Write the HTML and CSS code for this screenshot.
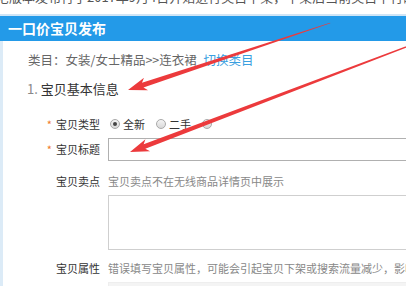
FILE: index.html
```html
<!DOCTYPE html>
<html lang="zh">
<head>
<meta charset="utf-8">
<link rel="stylesheet" href="styles.css">
</head>
<body>
<div class="page">
  <div class="note"><span>宅版本发布行了2017年9月4日开始进行类目下架，下架后当前类目下行的宝贝</span></div>
  <div class="topline"></div>
  <div class="header">一口价宝贝发布</div>
  <div class="panel">
    <div class="cat">类目：女装/女士精品&gt;&gt;连衣裙 <a class="link">切换类目</a></div>
    <div class="section"><span class="num">1.</span> 宝贝基本信息</div>
    <div class="form">
      <div class="row r-type">
        <div class="label"><span class="req">*</span>宝贝类型</div>
        <div class="field radios">
          <span class="radio checked"></span><span class="rtext">全新</span>
          <span class="radio"></span><span class="rtext">二手</span>
          <span class="radio"></span>
        </div>
      </div>
      <div class="row r-title">
        <div class="label tall"><span class="req">*</span>宝贝标题</div>
        <div class="field"><div class="input"></div></div>
      </div>
      <div class="row r-sell">
        <div class="label">宝贝卖点</div>
        <div class="field hint">宝贝卖点不在无线商品详情页中展示</div>
      </div>
      <div class="row r-area">
        <div class="label"></div>
        <div class="field"><div class="textarea"></div></div>
      </div>
      <div class="row r-attr">
        <div class="label">宝贝属性</div>
        <div class="field hint">错误填写宝贝属性，可能会引起宝贝下架或搜索流量减少，影响您的正常销售</div>
      </div>
      <div class="row r-box">
        <div class="label"></div>
        <div class="field"><div class="graybox"></div></div>
      </div>
    </div>
  </div>
  <svg class="arrows" width="406" height="286" viewBox="0 0 406 286">
    <g transform="translate(128 90) rotate(-18.35)">
      <polygon class="arrow" points="0,0 19,-6.5 15.5,-2.4 213,-0.3 213,0.3 15.5,2.4 19,6.5"/>
    </g>
    <g transform="translate(130 152) rotate(-20.83)">
      <polygon class="arrow" points="0,0 19,-6.5 15.5,-2.4 300,-0.6 300,0.6 15.5,2.4 19,6.5"/>
    </g>
  </svg>
</div>
</body>
</html>
```
FILE: styles.css
```css
html, body {
  margin: 0;
  padding: 0;
  background: #fff;
}
.page {
  position: relative;
  width: 406px;
  height: 286px;
  overflow: hidden;
  font-family: "Noto Sans CJK SC", "Noto Sans", sans-serif;
  color: #333;
}
.note {
  height: 14px;
  overflow: hidden;
  white-space: nowrap;
}
.note span {
  display: block;
  margin-top: -10px;
  margin-left: -4px;
  font-size: 13px;
  line-height: 13px;
  color: #555;
}
.topline {
  height: 2px;
  background: #cfe5f6;
}
.header {
  height: 25px;
  line-height: 25px;
  background: #239ae8;
  color: #fff;
  font-size: 14px;
  font-weight: bold;
  padding-left: 8px;
}
.panel {
  border-left: 3px solid #dcebf7;
  padding-top: 9px;
  height: 300px;
}
.cat {
  padding-left: 25px;
  font-size: 12.5px;
  line-height: 20px;
  color: #666;
  white-space: nowrap;
}
.link {
  color: #3aa0e0;
  margin-left: 4px;
}
.section {
  padding-left: 24px;
  margin-top: 8px;
  font-size: 13px;
  line-height: 21px;
  color: #333;
}
.num {
  color: #888;
}
.form {
  margin-top: 15px;
  font-size: 11px;
}
.row {
  display: flex;
  column-gap: 8px;
}
.label {
  width: 97px;
  flex: none;
  text-align: right;
  line-height: 20px;
  color: #333;
  white-space: nowrap;
}
.label.tall {
  line-height: 23px;
}
.req {
  color: #f07a2a;
  margin-right: 4px;
}
.field {
  width: 330px;
  flex: none;
  line-height: 20px;
  white-space: nowrap;
}
.radios {
  display: flex;
  align-items: center;
  height: 20px;
}
.radio {
  width: 8px;
  height: 8px;
  border-radius: 50%;
  border: 1px solid #a9a9a9;
  background: linear-gradient(#f4f4f4, #d8d8d8);
  position: relative;
  margin-left: 2px;
}
.radio.checked::after {
  content: "";
  position: absolute;
  left: 2px;
  top: 2px;
  width: 4px;
  height: 4px;
  border-radius: 50%;
  background: #444;
}
.rtext {
  margin-left: 3px;
  margin-right: 9px;
  color: #333;
}
.r-title {
  margin-top: 4px;
}
.input {
  height: 21px;
  border: 1px solid #b0b0b0;
  background: #fff;
}
.hint {
  color: #888;
}
.r-sell {
  margin-top: 10px;
}
.r-area {
  margin-top: 4px;
}
.textarea {
  height: 53px;
  border: 1px solid #cfcfcf;
  border-right: none;
}
.r-attr {
  margin-top: 8px;
}
.r-box {
  margin-top: 4px;
}
.graybox {
  height: 20px;
  background: #f4f4f4;
  border: 1px solid #eee;
}
.arrows {
  position: absolute;
  left: 0;
  top: 0;
  pointer-events: none;
}
.arrow {
  fill: #ec3a3c;
}
```
